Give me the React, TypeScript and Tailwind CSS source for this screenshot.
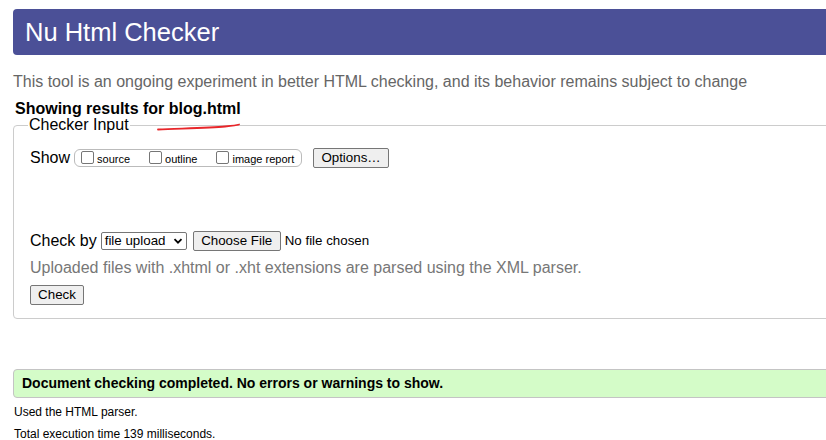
// Nu Html Checker – results page
const font = { fontFamily: '"Liberation Sans", Arial, sans-serif' }

function NativeButton({ children, className = '' }: { children: React.ReactNode; className?: string }) {
  return (
    <button
      type="button"
      className={`h-5 px-[7px] border border-[#767676] rounded-[2px] bg-[#efefef] text-[13.33px] leading-none text-black ${className}`}
    >
      {children}
    </button>
  )
}

function Box({ label }: { label: string }) {
  return (
    <label className="flex items-center text-[11px] text-black">
      <span className="w-[13px] h-[13px] border border-[#767676] rounded-[2px] bg-white mr-[3px] mt-[-2px]" />
      <span className="mt-[2px]">{label}</span>
    </label>
  )
}

export default function App() {
  return (
    <div className="w-[826px] h-[440px] overflow-hidden bg-white relative" style={font}>
      {/* header */}
      <div className="mt-[9px] ml-[13px] h-[46px] bg-[#4b5097] rounded-l-[4px] flex items-center pl-3">
        <h1 className="text-[25.5px] text-white leading-none mt-[1px]">Nu Html Checker</h1>
      </div>

      <p className="ml-[13px] mt-[18px] text-[16px] leading-[18px] text-[#666666]">
        This tool is an ongoing experiment in better HTML checking, and its behavior remains subject to change
      </p>
      <p className="ml-[15px] mt-[9px] text-[16px] leading-[18px] font-bold text-black">Showing results for blog.html</p>

      {/* Checker input */}
      <fieldset className="ml-[13px] mr-[-10px] mt-[-2px] border border-[#cccccc] rounded-[4px] pl-4 pb-[12px] h-[203px]">
        <legend className="text-[16px] leading-[18px] text-black ml-[-2px] px-[1px]">Checker Input</legend>

        <div className="flex items-center mt-[14px] h-5">
          <span className="text-[16px] text-black">Show</span>
          <div className="ml-1 h-[18px] w-[228px] border border-[#bbbbbb] rounded-[6px] flex items-center pl-[6px]">
            <Box label="source" />
            <span className="w-[19px]" />
            <Box label="outline" />
            <span className="w-[19px]" />
            <Box label="image report" />
          </div>
          <NativeButton className="ml-[11px] w-[76px]">Options…</NativeButton>
        </div>

        <div className="flex items-center mt-[63px] h-5">
          <span className="text-[16px] text-black">Check by</span>
          <div className="ml-[4px] h-[18px] w-[86px] border border-[#767676] rounded-[2px] bg-white flex items-center justify-between px-[3px] text-[13.33px] text-black">
            file upload
            <svg width="10" height="10" viewBox="0 0 10 10">
              <path d="M1.5 3.2 L5 6.7 L8.5 3.2" fill="none" stroke="#000" strokeWidth="1.8" />
            </svg>
          </div>
          <NativeButton className="ml-[6px] w-[88px]">Choose File</NativeButton>
          <span className="ml-[4px] text-[13.33px] text-black">No file chosen</span>
        </div>

        <p className="mt-[8px] text-[16px] leading-[18px] text-[#777777]">
          Uploaded files with .xhtml or .xht extensions are parsed using the XML parser.
        </p>
        <NativeButton className="mt-[8px] w-[54px]">Check</NativeButton>
      </fieldset>

      {/* result */}
      <div className="ml-[13px] mr-[-10px] mt-[50px] h-[29px] bg-[#d4fcc8] border border-[#c4c4c4] rounded-[4px] flex items-center pl-2">
        <p className="text-[14px] font-bold text-black">Document checking completed. No errors or warnings to show.</p>
      </div>
      <p className="ml-[14px] mt-[7px] text-[12px] leading-[14px] text-black">Used the HTML parser.</p>
      <p className="ml-[14px] mt-[8px] text-[12px] leading-[14px] text-black">Total execution time 139 milliseconds.</p>

      {/* hand-drawn red underline */}
      <svg className="absolute left-[155px] top-[121px]" width="90" height="12" viewBox="0 0 90 12">
        <path d="M3 8.5 C 25 7.5, 55 7, 70 5.5 S 82 4, 84 3.5" fill="none" stroke="#e8262a" strokeWidth="1.8" strokeLinecap="round" />
      </svg>
    </div>
  )
}
